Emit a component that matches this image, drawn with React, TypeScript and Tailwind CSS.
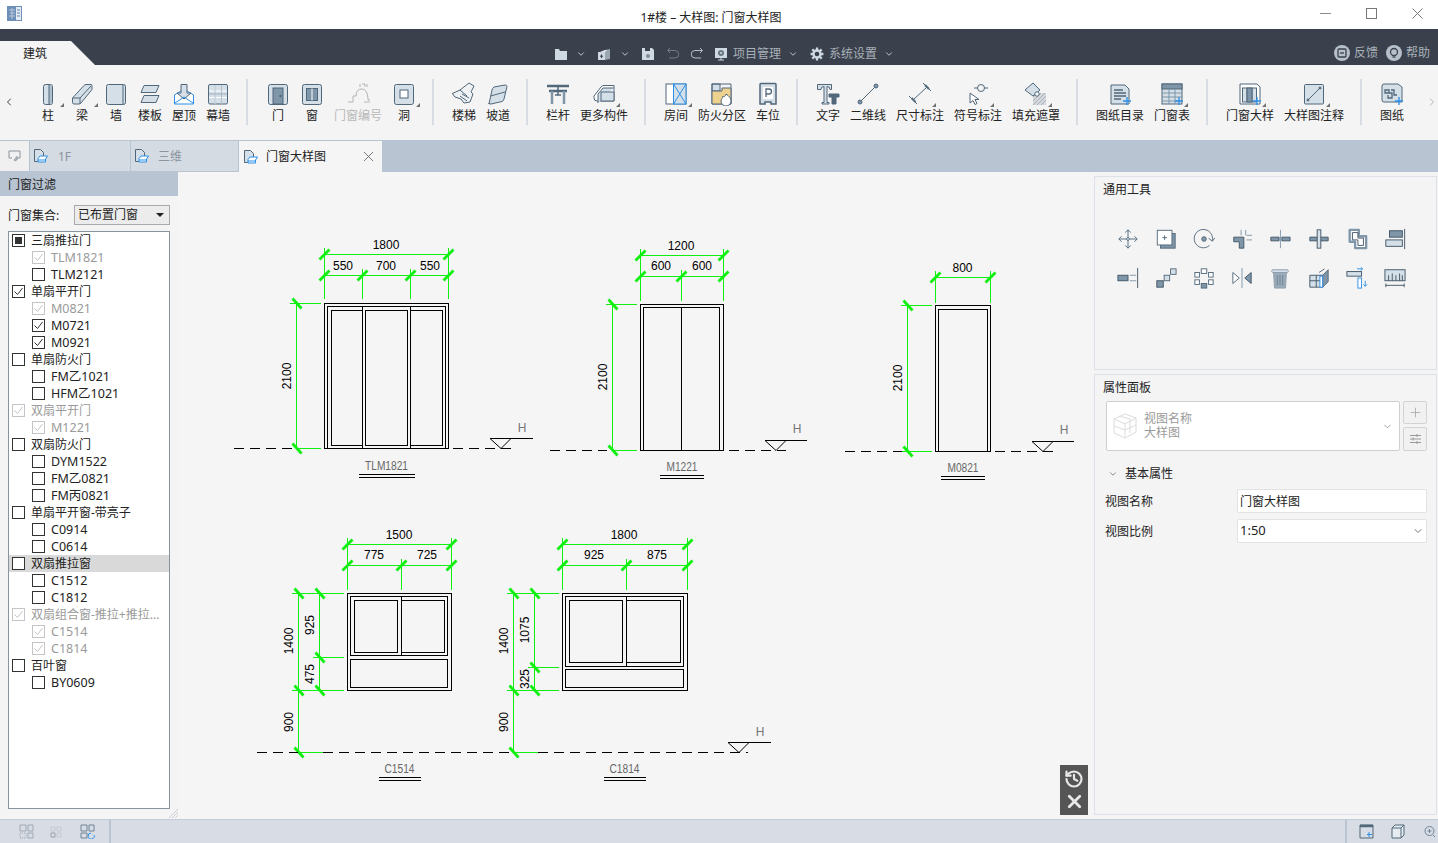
import React from "react";
import { ChevronDown, ChevronLeft, ChevronRight, History, Plus, X } from "lucide-react";

const S = "#51677a";
const F = "#d4dfe7";
const M = "#7f95a8";
const B = "#2b8fe8";

const Svg = ({ children, size = 24 }: { children: React.ReactNode; size?: number }) => (
    <svg width={size} height={size} viewBox="0 0 24 24" fill="none" stroke={S} strokeWidth="1">
        {children}
    </svg>
);

/* ribbon icons */
const ribbonIcons: Record<string, React.ReactNode> = {
    column: (<><rect x="7.5" y="2.5" width="9" height="20" rx="2" fill={F} /><rect x="13" y="3" width="3" height="19" fill="#aebfcc" stroke="none" /><path d="M13 3v19" /></>),
    beam: (<><path d="M2.5 16 14 3.5q1-1 2-1h5q1 0 1 1v4L11 21q-1 1-2 1H4q-1.500 0-1.500-1.500z" fill={F} /><path d="M3 16h7l11-12M10 16v6" /></>),
    wall: (<><rect x="2.500" y="2.500" width="19" height="20" rx="2" fill={F} /><path d="M19 3v19" /></>),
    slab: (<><path d="M6 3.500h15l-3 7H3z" fill={F} strokeLinejoin="round" /><path d="M6 13.500h15l-3 7H3z" fill={F} strokeLinejoin="round" /></>),
    roof: (<><path d="M2.500 13 9 9h6l6.500 4v9h-19z" fill="#fff" stroke={B} /><path d="M9 2.500h6V11h4l-7 6-7-6h4z" fill={F} /><path d="M3 21l9-6 9 6" stroke={B} /></>),
    curtain: (<><rect x="2.500" y="2.500" width="19" height="19.500" rx="1.500" fill={F} /><path d="M9 3v19M15.500 3v19M3 9h18M3 15.500h18" stroke="#fff" /><path d="M9 3v19M15.500 3v19M3 12h18" stroke={M} strokeWidth=".6" /></>),
    door: (<><rect x="2.500" y="2.500" width="19" height="20" rx="2" fill={F} /><rect x="7" y="6" width="10" height="16" fill={M} /><circle cx="14.500" cy="14" r=".8" fill={S} /></>),
    window: (<><rect x="2.500" y="2.500" width="19" height="20" rx="2" fill={F} /><rect x="6.500" y="6.500" width="11" height="12" fill={M} /><path d="M12 6.500v12" stroke="#fff" /></>),
    tag: (<g stroke="#b4b4b4"><path d="M2 20h5v-6h3q0-7 6-7 5 0 6 9v2h2" /><path d="M18 20h6" /><path d="M14 2v3M16 2h3v3M21 2v3" /></g>),
    hole: (<><rect x="2.500" y="2.500" width="19" height="20" rx="2" fill={F} /><rect x="8" y="8" width="8" height="8" fill="#fff" /></>),
    stair: (<><path d="M1.500 11 8 8l9-7 5 3-3 6 2 2-3 8-6 1-3-4-6-2q-2-2-2.500-4z" fill="#eef2f5" /><path d="M8 14l7 5M10 12l7 4M8 8l7 6" /></>),
    ramp: (<><path d="M3 22 6 8q.5-2 2-3l11-2q2 0 2 1.500L18 17q-.5 2-2 2.500L5 22q-2 .5-2-1z" fill={F} /><path d="M4.500 14 19 10" /></>),
    rail: (<><path d="M1 4h22M3 9h18" strokeWidth="2.500" /><path d="M6 9v13M18 9v13" strokeWidth="2.500" stroke={M} /><path d="M12 4v9M9 13h6" stroke={S} strokeWidth="1.500" /></>),
    more: (<><path d="M2 14 9 5q1-1.500 3-1.500h10V19H5q-3 0-3-3z" fill="#fff" /><path d="M6 21V12l5-6h11M9 10h13v9H9z" fill={F} /></>),
    room: (<><rect x="2" y="2" width="20" height="20" fill="#fff" /><rect x="9.500" y="2" width="12.500" height="20" fill={F} stroke={B} /><path d="M9.500 2 22 22M22 2 9.500 22" stroke={B} /></>),
    fire: (<><rect x="2" y="2" width="8" height="7" fill={F} /><path d="M2 2h19v20H2z" /><path d="M2 9h10V6h9v16H2z" fill="#ecd28e" /><path d="M16 12c3 2 5 4 5 7a5 5 0 0 1-10 0c0-2 2-3 2-5 1 1 2 1 3-2z" fill="#fff" stroke={S} /></>),
    parking: (<><path d="M5 1.500h14q1 0 1 1V22h-5v-2H9v2H4V2.500q0-1 1-1z" fill={F} stroke={S} strokeWidth="1.500" /><rect x="7" y="5" width="10" height="12" fill="#fff" stroke="none" /><path d="M10 15V7h3a2 2 0 0 1 0 5h-3" strokeWidth="1.300" /></>),
    text: (<><path d="M1.500 2.500h14v5h-1.500q0-3-3-3v16h2v1.500H6v-1.500h2v-16q-3 0-3 3H1.500z" fill={F} /><path d="M13 12h10v3h-3v7h-4v-7h-3z" fill={S} /></>),
    line2d: (<><path d="M5 19 19 5" /><circle cx="4" cy="20" r="2" fill={M} /><circle cx="20" cy="4" r="2" fill={M} /></>),
    dim: (<><path d="M5 18 19 5" /><path d="M1 14l8 8M15 1l8 8" /><path d="M3.500 16l4 4M17 3l4 4" strokeWidth="2" /></>),
    symbol: (<><path d="M8 6h14" /><circle cx="15" cy="6" r="3.500" fill="#f4f4f4" /><path d="M4 11l0 10 3-2.500 2 4 2-1-2-4h4z" fill="#fff" /></>),
    fill: (<><rect x="9" y="11" width="13" height="12" fill="#d5d9de" stroke="none" /><path d="M9 15l4-4M9 19l8-8M9 23 21 11M13 23l9-9M17 23l5-5" stroke="#a7aeb6" /><path d="M1 8 9 1l7 7-7 6z" fill={F} /><circle cx="13" cy="12" r="2.200" fill="#fff" /></>),
    list: (<><path d="M3 3h14l4 4v15H3z" fill={F} /><path d="M6 8h9M6 11h12M6 14h12M6 17h7" strokeWidth="1.300" /></>),
    table: (<><rect x="2" y="2" width="20" height="20" fill={F} /><rect x="2" y="2" width="20" height="5" fill={M} /><path d="M2 11h20M2 15h20M2 19h20M9 7v15M15 7v15" stroke={M} /></>),
    detail: (<><path d="M2 2h17l3 3v17H2z" fill="#fff" /><rect x="4.500" y="6" width="14" height="14" fill={F} /><path d="M9 6v14M14 6v14" /><rect x="9" y="6" width="5" height="14" fill={M} /></>),
    annot: (<><rect x="2.500" y="2.500" width="19" height="19.500" rx="1" fill={F} /><path d="M6 18 18 6" /><circle cx="6" cy="18" r="1" fill={S} /><circle cx="18" cy="6" r="1" fill={S} /></>),
    sheet: (<><path d="M2 4q0-2 2-2h14l4 3v15H4q-2 0-2-2z" fill={F} /><path d="M5 8h4v3H5zM5 11h7v5H8v-3M11 8h3v5h3" strokeWidth="1.300" /></>),
};

const Plus2 = () => <path d="M19 15v8M15 19h8" stroke={B} strokeWidth="1.300" />;

type RibbonItem = { label: string; icon: string; w: number; caret?: boolean; off?: boolean; add?: boolean };

const groups: RibbonItem[][] = [
    [
        { label: "柱", icon: "column", w: 34, caret: true },
        { label: "梁", icon: "beam", w: 34, caret: true },
        { label: "墙", icon: "wall", w: 34 },
        { label: "楼板", icon: "slab", w: 34 },
        { label: "屋顶", icon: "roof", w: 34 },
        { label: "幕墙", icon: "curtain", w: 34 },
    ],
    [
        { label: "门", icon: "door", w: 34 },
        { label: "窗", icon: "window", w: 34 },
        { label: "门窗编号", icon: "tag", w: 58, off: true },
        { label: "洞", icon: "hole", w: 34, caret: true },
    ],
    [
        { label: "楼梯", icon: "stair", w: 34 },
        { label: "坡道", icon: "ramp", w: 34 },
    ],
    [
        { label: "栏杆", icon: "rail", w: 34 },
        { label: "更多构件", icon: "more", w: 58, caret: true },
    ],
    [
        { label: "房间", icon: "room", w: 34, caret: true },
        { label: "防火分区", icon: "fire", w: 58 },
        { label: "车位", icon: "parking", w: 34 },
    ],
    [
        { label: "文字", icon: "text", w: 34 },
        { label: "二维线", icon: "line2d", w: 46 },
        { label: "尺寸标注", icon: "dim", w: 58, caret: true },
        { label: "符号标注", icon: "symbol", w: 58, caret: true },
        { label: "填充遮罩", icon: "fill", w: 58, caret: true },
    ],
    [
        { label: "图纸目录", icon: "list", w: 58, add: true },
        { label: "门窗表", icon: "table", w: 46, caret: true, add: true },
    ],
    [
        { label: "门窗大样", icon: "detail", w: 58, caret: true, add: true },
        { label: "大样图注释", icon: "annot", w: 70, caret: true },
    ],
    [{ label: "图纸", icon: "sheet", w: 34, add: true }],
];

const RibbonBtn = ({ item }: { item: RibbonItem }) => (
    <div className="flex flex-col items-center pt-[17px]" style={{ width: item.w }}>
        <div className="relative h-[24px] w-[24px]">
            <Svg>
                {ribbonIcons[item.icon]}
                {item.add && <Plus2 />}
            </Svg>
            {item.caret && (
                <div className="absolute right-[-4px] bottom-[-1px] h-0 w-0 border-b-[4px] border-l-[4px] border-b-[#707070] border-l-transparent" />
            )}
        </div>
        <div className={`mt-[1px] whitespace-nowrap text-[12px] leading-[18px] ${item.off ? "text-[#b8b8b8]" : "text-[#222]"}`}>
            {item.label}
        </div>
    </div>
);

const Ribbon = () => (
    <div className="flex h-[75px] bg-[#f4f4f4]">
        <div className="flex w-[31px] items-center pb-[1px] pl-[3px]">
            <ChevronLeft size={12} color="#444" strokeWidth={2} />
        </div>
        {groups.map((g, i) => (
            <React.Fragment key={i}>
                {i > 0 && <div className="ml-[11px] mr-[13px] mt-[14px] h-[46px] w-[2px] bg-[#d8dde5]" />}
                {g.map((it) => (
                    <RibbonBtn key={it.label} item={it} />
                ))}
            </React.Fragment>
        ))}
        <div className="flex flex-1 items-center justify-end pb-[1px]">
            <ChevronRight size={12} color="#b5b5b5" strokeWidth={2} />
        </div>
    </div>
);

const TitleBar = () => (
    <div className="relative flex h-[29px] items-center justify-center bg-white pr-[16px] pt-[6px]">
        <svg className="absolute left-[7px] top-[6px]" width="15" height="15" viewBox="0 0 15 15">
            <rect width="15" height="15" fill="#6d8fb8" />
            <rect x="9" y="1" width="5" height="13" fill="#e4ebf3" />
            <path d="M2 4h6M3 7h5M2 10h6M5 2v11" stroke="#b9c9da" strokeWidth="1" />
            <path d="M10 4h3M10 7h3M10 10h3" stroke="#5f86b3" strokeWidth="1" />
        </svg>
        <div className="text-[12px] leading-[18px] text-[#222]">1#楼 – 大样图: 门窗大样图</div>
        <div className="absolute right-[15px] top-[8px] flex items-center gap-[35px]">
            <svg width="11" height="11" viewBox="0 0 11 11" stroke="#8a8a8a"><path d="M0 5.500h11" /></svg>
            <svg width="11" height="11" viewBox="0 0 11 11" stroke="#777" fill="none"><rect x=".5" y=".5" width="10" height="10" /></svg>
            <svg width="11" height="11" viewBox="0 0 11 11" stroke="#777"><path d="M.5.5l10 10M10.500.5l-10 10" /></svg>
        </div>
    </div>
);

const Hd = "#cfd9e2";
const Chev = () => <ChevronDown size={10} color="#d5dbe1" strokeWidth={2} />;

const HeaderBar = () => (
    <div className="relative flex h-[36px] items-end bg-[#3a414c]">
        <div className="flex h-[24px] w-[95px] items-center bg-[#f4f4f4] pl-[23px] pt-[1px] text-[12px] text-[#222] [clip-path:polygon(0_0,71px_0,95px_100%,0_100%)]">
            建筑
        </div>
        <div className="absolute left-[554px] top-[17px] flex items-center text-[12px] leading-[16px] text-[#a8b0b9]">
            <svg width="14" height="14" viewBox="0 0 14 14"><path d="M1 2h4l1 2h7v9H1z" fill={Hd} /></svg>
            <div className="ml-[8px] mr-[11px]"><Chev /></div>
            <svg width="14" height="14" viewBox="0 0 14 14"><path d="M1 5h7v8H1z" fill={Hd} /><path d="M8 3l5-1v10l-5 1z" fill="#9aa6b2" /><path d="M3 5l5-2h2L8 5z" fill="#e6ebf0" /><path d="M4.500 7.500v3.500M3 9.200h3" stroke="#3a414c" /></svg>
            <div className="ml-[9px] mr-[11px]"><Chev /></div>
            <svg width="14" height="14" viewBox="0 0 14 14"><path d="M1 1h10l2 2v10H1z" fill={Hd} /><rect x="4" y="1" width="5" height="3" fill="#3a414c" /><circle cx="7" cy="9" r="2" fill="#7f8b97" /></svg>
            <svg className="ml-[11px]" width="14" height="14" viewBox="0 0 14 14" fill="none" stroke="#6f7b87"><path d="M4 1 1.500 3.500 4 6M2 3.500h7a3.500 3.500 0 0 1 0 7.500H3" /></svg>
            <svg className="ml-[10px]" width="14" height="14" viewBox="0 0 14 14" fill="none" stroke="#b5bdc5"><path d="M10 1l2.500 2.500L10 6M12 3.500H5a3.500 3.500 0 0 0 0 7.500h6" /></svg>
            <svg className="ml-[10px]" width="14" height="14" viewBox="0 0 14 14"><rect x="1" y="1" width="12" height="10" fill={Hd} /><circle cx="7" cy="6" r="3" fill="#6b7783" /><circle cx="7" cy="6" r="1" fill={Hd} /><path d="M7 11v2M4 13h6" stroke={Hd} /></svg>
            <span className="ml-[5px]">项目管理</span>
            <div className="ml-[7px] mr-[12px]"><Chev /></div>
            <svg width="14" height="14" viewBox="0 0 24 24" fill="none" stroke={Hd} strokeWidth="4"><circle cx="12" cy="12" r="6" /><path d="M12 1v4M12 19v4M1 12h4M19 12h4M4 4l3 3M17 17l3 3M4 20l3-3M17 7l3-3" /></svg>
            <span className="ml-[5px]">系统设置</span>
            <div className="ml-[7px]"><Chev /></div>
        </div>
        <div className="absolute right-[8px] top-[16px] flex items-center text-[12px] leading-[16px] text-[#a8b0b9]">
            <svg width="16" height="16" viewBox="0 0 16 16"><circle cx="8" cy="8" r="8" fill="#b6c0ca" /><rect x="4" y="4" width="8" height="8" rx="1" fill="none" stroke="#3a414c" strokeWidth="1.300" /><path d="M6 8h4" stroke="#3a414c" strokeWidth="1.300" /></svg>
            <span className="ml-[4px]">反馈</span>
            <svg className="ml-[8px]" width="16" height="16" viewBox="0 0 16 16"><circle cx="8" cy="8" r="8" fill="#b6c0ca" /><circle cx="8" cy="7" r="3.500" fill="none" stroke="#3a414c" strokeWidth="1.300" /><path d="M6.500 12h3" stroke="#3a414c" strokeWidth="1.300" /></svg>
            <span className="ml-[4px]">帮助</span>
        </div>
    </div>
);

const SheetIcon = () => (
    <svg width="16" height="16" viewBox="0 0 16 16" fill="none">
        <path d="M1.500 1.500h6l3 3v9h-9z" fill="#d4dfe7" stroke="#51677a" />
        <path d="M5 10.500 7 8h7.500l-2 3v3H5z" fill="#fff" stroke="#2b8fe8" />
        <path d="M5 12h8" stroke="#2b8fe8" />
    </svg>
);

const TabBar = () => (
    <div className="flex h-[32px] items-stretch gap-[1px] bg-[#b8c4d2] pt-[1px]">
        <div className="mb-[1px] flex w-[29px] items-center justify-center bg-[#f0f0f0]">
            <svg width="14" height="12" viewBox="0 0 14 12" fill="none" stroke="#8a939d"><path d="M1 1h11v7H7M1 1v7h3" /><path d="M9 6v4H6M7.500 8.500 6 10l1.500 1" /></svg>
        </div>
        <div className="mb-[1px] flex w-[100px] items-center bg-[#d5dbe3] pl-[3px] text-[12px] text-[#8b95a0]">
            <SheetIcon />
            <span className="ml-[9px] pt-[1px]">1F</span>
        </div>
        <div className="mb-[1px] flex w-[107px] items-center bg-[#d5dbe3] pl-[3px] text-[12px] text-[#8b95a0]">
            <SheetIcon />
            <span className="ml-[8px] pt-[1px]">三维</span>
        </div>
        <div className="flex w-[143px] items-center bg-[#f5f5f5] pl-[4px] pr-[5px] text-[12px] text-[#222]">
            <SheetIcon />
            <span className="ml-[7px] flex-1 pt-[1px]">门窗大样图</span>
            <X size={17} color="#555" strokeWidth={1.1} />
        </div>
    </div>
);

type Row = { t: string; lv: 0 | 1; st?: "on" | "mix"; off?: boolean; hl?: boolean };
const rows: Row[] = [
    { t: "三扇推拉门", lv: 0, st: "mix" },
    { t: "TLM1821", lv: 1, st: "on", off: true },
    { t: "TLM2121", lv: 1 },
    { t: "单扇平开门", lv: 0, st: "on" },
    { t: "M0821", lv: 1, st: "on", off: true },
    { t: "M0721", lv: 1, st: "on" },
    { t: "M0921", lv: 1, st: "on" },
    { t: "单扇防火门", lv: 0 },
    { t: "FM乙1021", lv: 1 },
    { t: "HFM乙1021", lv: 1 },
    { t: "双扇平开门", lv: 0, st: "on", off: true },
    { t: "M1221", lv: 1, st: "on", off: true },
    { t: "双扇防火门", lv: 0 },
    { t: "DYM1522", lv: 1 },
    { t: "FM乙0821", lv: 1 },
    { t: "FM丙0821", lv: 1 },
    { t: "单扇平开窗-带亮子", lv: 0 },
    { t: "C0914", lv: 1 },
    { t: "C0614", lv: 1 },
    { t: "双扇推拉窗", lv: 0, hl: true },
    { t: "C1512", lv: 1 },
    { t: "C1812", lv: 1 },
    { t: "双扇组合窗-推拉+推拉...", lv: 0, st: "on", off: true },
    { t: "C1514", lv: 1, st: "on", off: true },
    { t: "C1814", lv: 1, st: "on", off: true },
    { t: "百叶窗", lv: 0 },
    { t: "BY0609", lv: 1 },
];

const Check = ({ st, off }: { st?: "on" | "mix"; off?: boolean }) => (
    <svg width="13" height="13" viewBox="0 0 13 13" className="shrink-0">
        <rect x=".5" y=".5" width="12" height="12" fill="#fff" stroke={off ? "#c4c4c4" : "#333"} />
        {st === "on" && <path d="M2.500 6.500 5.500 9.500 10.500 3" fill="none" stroke={off ? "#c4c4c4" : "#333"} />}
        {st === "mix" && <rect x="3" y="3" width="7" height="7" fill="#333" />}
    </svg>
);

const LeftPanel = () => (
    <div className="flex w-[178px] shrink-0 flex-col bg-[#f4f4f4]">
        <div className="flex h-[24px] items-center bg-[#b8c4d2] pl-[8px] pt-[1px] text-[12px] text-[#222]">门窗过滤</div>
        <div className="mt-[9px] flex h-[20px] items-center pl-[8px] pr-[8px] text-[12px] text-[#222]">
            <span className="w-[66px] pt-[1px]">门窗集合:</span>
            <div className="flex h-[20px] flex-1 items-center justify-between border border-[#a9a9a9] bg-[#ececec] pl-[3px] pr-[5px]">
                <span>已布置门窗</span>
                <div className="h-0 w-0 border-x-[4px] border-t-[4px] border-x-transparent border-t-[#222]" />
            </div>
        </div>
        <div className="relative mx-[8px] mt-[6px] h-[578px] border border-[#8a929c] bg-white">
            {rows.map((r) => (
                <div
                    key={r.t}
                    className={`flex h-[17px] items-center whitespace-nowrap ${r.lv ? "pl-[23px] text-[12.5px]" : "pl-[3px] text-[12px]"} ${r.off ? "text-[#9a9a9a]" : "text-[#222]"} ${r.hl ? "bg-[#d9d9d9]" : ""}`}
                >
                    <Check st={r.st} off={r.off} />
                    <span className={r.lv ? "ml-[6px] pt-[2px]" : "ml-[6px]"}>{r.t}</span>
                </div>
            ))}
            <svg className="absolute -right-[9px] -bottom-[10px]" width="9" height="9" viewBox="0 0 9 9" stroke="#c9ced4"><path d="M0 9 9 0M3 9l6-6M6 9l3-3" /></svg>
        </div>
    </div>
);

const GREEN = "#10f010";

const Ln = ({ d, c = "#000" }: { d: string; c?: string }) => <path d={d} stroke={c} fill="none" shapeRendering="crispEdges" />;

const HTick = ({ x, y }: { x: number; y: number }) => (
    <g stroke={GREEN} fill="none">
        <path d={`M${x - 5} ${y + 5} L${x + 5} ${y - 5}`} strokeWidth="2.800" />
        <path d={`M${x} ${y - 7} V${y + 5}`} strokeWidth="1" shapeRendering="crispEdges" />
    </g>
);
const VTick = ({ x, y }: { x: number; y: number }) => (
    <path d={`M${x - 4} ${y - 5} L${x + 5} ${y + 5}`} stroke={GREEN} strokeWidth="2.800" fill="none" />
);

const HDim = ({ y, xs }: { y: number; xs: number[] }) => (
    <g>
        <Ln c={GREEN} d={`M${xs[0]} ${y}H${xs[xs.length - 1]}`} />
        {xs.map((x) => <HTick key={x} x={x} y={y} />)}
    </g>
);
const VDim = ({ x, ys }: { x: number; ys: number[] }) => (
    <g>
        <Ln c={GREEN} d={`M${x} ${ys[0]}V${ys[ys.length - 1]}`} />
        {ys.map((y) => <VTick key={y} x={x} y={y} />)}
    </g>
);

const T = ({ x, y, t, rot, c = "#000", len }: { x: number; y: number; t: string; rot?: boolean; c?: string; len?: number }) => (
    <text
        x={x}
        y={y}
        fill={c}
        textAnchor="middle"
        dominantBaseline="central"
        fontSize="12"
        fontFamily="'Liberation Sans', sans-serif"
        textLength={len}
        lengthAdjust={len ? "spacingAndGlyphs" : undefined}
        transform={rot ? `rotate(-90 ${x} ${y})` : undefined}
    >
        {t}
    </text>
);

const Level = ({ x, y, mark, tx, ty }: { x: number; y: number; mark: number; tx: number; ty: number }) => (
    <g>
        <path d={`M${x + 21} ${y - 10}H${mark}`} stroke="#000" fill="none" shapeRendering="crispEdges" />
        <path d={`M${x} ${y - 10}H${x + 21}L${x + 11} ${y}Z`} stroke="#000" fill="none" />
        <T x={tx} y={ty} t="H" c="#777" />
    </g>
);

const Tag = ({ x, y, t, w, len }: { x: number; y: number; t: string; w: number; len: number }) => (
    <g>
        <T x={x} y={y} t={t} c="#666" len={len} />
        <Ln d={`M${x - w} ${y + 8.500}H${x + w}M${x - w} ${y + 11.500}H${x + w}`} />
    </g>
);

const Dash = ({ y, x1, x2 }: { y: number; x1: number; x2: number }) => (
    <path d={`M${x1} ${y}H${x2}`} stroke="#000" strokeDasharray="10 6" fill="none" shapeRendering="crispEdges" />
);

const Drawing = () => (
    <svg width="916" height="647" viewBox="178 172 916 647" className="block">
        {/* TLM1821 */}
        <g>
            <Ln d="M324.500 303.500H448.500V448.500H324.500ZM327.500 448V306.500H445.500V448M331.500 445.500V310.500H362.500M362.500 445.500H331.500M410.500 310.500H442.500V445.500H410.500M362.500 306.500V448.500M410.500 306.500V448.500M365.500 310.500H407.500V445.500H365.500Z" />
            <HDim y={254.500} xs={[324.500, 448.500]} />
            <HDim y={275.500} xs={[324.500, 362.500, 410.500, 448.500]} />
            <Ln c={GREEN} d="M324.500 250V299M362.500 276V299M410.500 276V299M448.500 250V299M290 303.500H321M297 448.500H321" />
            <VDim x={296.500} ys={[303.500, 448.500]} />
            <T x={386} y={245} t="1800" />
            <T x={343} y={266} t="550" />
            <T x={386} y={266} t="700" />
            <T x={430} y={266} t="550" />
            <T x={287} y={376} t="2100" rot />
            <Dash y={448.500} x1={234} x2={292} />
            <Dash y={448.500} x1={453} x2={511} />
            <Level x={490} y={448.500} mark={533} tx={522} ty={428} />
            <Tag x={386.500} y={466} t="TLM1821" w={28} len={43} />
        </g>
        {/* M1221 */}
        <g>
            <Ln d="M640.500 304.500H723.500V450.500H640.500ZM643.500 450V307.500H719.500V450M681.500 307.500V450" />
            <HDim y={255.500} xs={[640.500, 723.500]} />
            <HDim y={276.500} xs={[640.500, 681.500, 723.500]} />
            <Ln c={GREEN} d="M640.500 250V301M681.500 277V301M723.500 250V301M606 304.500H637M612 450.500H637" />
            <VDim x={612.500} ys={[304.500, 450.500]} />
            <T x={681} y={246} t="1200" />
            <T x={661} y={266} t="600" />
            <T x={702} y={266} t="600" />
            <T x={603} y={377} t="2100" rot />
            <Dash y={450.500} x1={550} x2={607} />
            <Dash y={450.500} x1={729} x2={786} />
            <Level x={765} y={450.500} mark={807} tx={797} ty={429} />
            <Tag x={682} y={467} t="M1221" w={22} len={31} />
        </g>
        {/* M0821 */}
        <g>
            <Ln d="M935.500 305.500H990.500V451.500H935.500ZM938.500 451V309.500H987.500V451" />
            <HDim y={277.500} xs={[935.500, 990.500]} />
            <Ln c={GREEN} d="M935.500 272V303M990.500 272V303M901 305.500H932M901 451.500H932" />
            <VDim x={907.500} ys={[305.500, 451.500]} />
            <T x={962.500} y={268} t="800" />
            <T x={898} y={378} t="2100" rot />
            <Dash y={451.500} x1={845} x2={902} />
            <Dash y={451.500} x1={995} x2={1053} />
            <Level x={1032} y={451.500} mark={1074} tx={1064} ty={430} />
            <Tag x={963} y={468} t="M0821" w={22} len={31} />
        </g>
        {/* C1514 */}
        <g>
            <Ln d="M347.500 593.500H451.500V690.500H347.500ZM350.500 596.500H447.500V655.500H350.500ZM350.500 659.500H447.500V687.500H350.500ZM401.500 596.500V655.500M354.500 600.500H397.500V652.500H354.500ZM401.500 600.500H444.500V652.500H401.500" />
            <HDim y={544.500} xs={[347.500, 451.500]} />
            <HDim y={565.500} xs={[347.500, 401.500, 451.500]} />
            <Ln c={GREEN} d="M347.500 540V590M401.500 566V590M451.500 540V590M292 593.500H344M313 657.500H344M292 690.500H344M298 752.500H323" />
            <VDim x={298.500} ys={[593.500, 690.500, 752.500]} />
            <VDim x={319.500} ys={[593.500, 657.500, 690.500]} />
            <T x={399} y={535} t="1500" />
            <T x={374} y={555} t="775" />
            <T x={427} y={555} t="725" />
            <T x={289} y={641} t="1400" rot />
            <T x={310} y={625} t="925" rot />
            <T x={310} y={674} t="475" rot />
            <T x={289} y={722} t="900" rot />
            <Tag x={399.500} y={769} t="C1514" w={21} len={30} />
        </g>
        {/* C1814 */}
        <g>
            <Ln d="M562.500 593.500H687.500V690.500H562.500ZM565.500 596.500H683.500V666.500H565.500ZM565.500 669.500H683.500V687.500H565.500ZM626.500 596.500V666.500M569.500 600.500H622.500V662.500H569.500ZM626.500 600.500H680.500V662.500H626.500" />
            <HDim y={544.500} xs={[562.500, 687.500]} />
            <HDim y={565.500} xs={[562.500, 626.500, 687.500]} />
            <Ln c={GREEN} d="M562.500 540V590M626.500 566V590M687.500 540V590M507 593.500H559M528 667.500H559M507 690.500H559M513 752.500H538" />
            <VDim x={513.500} ys={[593.500, 690.500, 752.500]} />
            <VDim x={534.500} ys={[593.500, 667.500, 690.500]} />
            <T x={624} y={535} t="1800" />
            <T x={594} y={555} t="925" />
            <T x={657} y={555} t="875" />
            <T x={504} y={641} t="1400" rot />
            <T x={525} y={630} t="1075" rot />
            <T x={525} y={679} t="325" rot />
            <T x={504} y={722} t="900" rot />
            <Tag x={624.500} y={769} t="C1814" w={21} len={30} />
            <Level x={728} y={752.500} mark={771} tx={760} ty={732} />
        </g>
        <Dash y={752.500} x1={257} x2={298} />
        <Dash y={752.500} x1={323} x2={513} />
        <Dash y={752.500} x1={538} x2={748} />
    </svg>
);

const toolIcons: React.ReactNode[] = [
    <><path d="M12 2v20M2 12h20M9 5l3-3 3 3M9 19l3 3 3-3M5 9l-3 3 3 3M19 9l3 3-3 3" /><circle cx="12" cy="12" r="1.500" fill="#fff" /></>,
    <><rect x="6" y="6" width="16" height="16" fill={M} /><rect x="2.500" y="2.500" width="16" height="16" fill="#fff" /><path d="M10.500 8v5M8 10.500h5" /></>,
    <><path d="M21 14a10 10 0 1 0-3 5" /><path d="M17 11l4 3.500 3-4" /><circle cx="12" cy="12" r="2.500" fill={M} /></>,
    <><path d="M3 10h11v12h-5v-7H3z" fill={M} stroke="#3f5365" /><path d="M11 2v6M16 2v6M17 8h6M17 13h6" stroke={M} /></>,
    <><path d="M2 10h9v4H2zM14 10h9v4h-9z" fill={M} stroke="#3f5365" /><path d="M12.500 2v20" stroke={M} /></>,
    <><path d="M2 10h20v4H2z" fill={M} stroke="#3f5365" /><rect x="10" y="2" width="4" height="20" fill={F} stroke="#3f5365" /></>,
    <><path d="M4 2h10v7h8v13H10v-7H4z" fill="#fff" stroke={M} strokeWidth="2.500" strokeLinejoin="round" /><path d="M7 5h6v6h6v8h-6v-6H7z" fill="#fff" stroke="#3f5365" /></>,
    <><path d="M22.500 1v22" stroke="#3f5365" /><rect x="6" y="3" width="14" height="7" fill={M} stroke="#3f5365" /><rect x="2" y="13" width="18" height="7" fill={F} stroke="#3f5365" /></>,
    <><path d="M22.500 1v22" stroke="#3f5365" /><rect x="1" y="9" width="11" height="6" fill={M} stroke="#3f5365" /><path d="M14 9h7M14 15h7" stroke={M} /></>,
    <><rect x="2" y="15" width="7" height="7" fill={M} stroke="#3f5365" /><rect x="10" y="9" width="6" height="6" fill={F} /><rect x="17" y="2" width="6" height="6" fill={F} /></>,
    <><rect x="9" y="2" width="6" height="5" fill="#fff" /><rect x="2" y="6" width="5" height="5" fill="#fff" /><rect x="17" y="6" width="5" height="5" fill="#fff" /><rect x="2" y="14" width="5" height="5" fill="#fff" /><rect x="17" y="14" width="5" height="5" fill="#fff" /><rect x="9" y="18" width="6" height="5" fill={M} /></>,
    <><path d="M12 1v22" stroke={M} /><path d="M2 6l7 6-7 6z" fill="#fff" /><path d="M22 6l-7 6 7 6z" fill={M} stroke="#3f5365" /></>,
    <><rect x="3" y="3" width="18" height="3" rx="1" fill={F} stroke="#8c9cab" /><path d="M5 6h14l-1 17H6z" fill="#9aabb9" stroke="#8c9cab" /><path d="M9 9v11M12 9v11M15 9v11" stroke="#6f8090" /></>,
    <><path d="M2 9h14v13H2z" fill={F} stroke="#3f5365" /><path d="M9 9v13M2 15h14" stroke="#3f5365" /><path d="M16 9l6-6v13l-6 6z" fill={M} /><path d="M12 6l6-4" /><rect x="13" y="10" width="3" height="12" fill="#fff" stroke={B} /></>,
    <><rect x="1" y="5" width="16" height="5" fill={F} stroke="#3f5365" /><path d="M12 2h6M16 0l2 2-2 2" stroke={B} /><rect x="13" y="12" width="4" height="11" fill="#fff" stroke={B} /><path d="M21 15v6M19 19l2 2 2-2" stroke={B} /></>,
    <><rect x="1" y="3" width="22" height="12" fill={F} stroke="#3f5365" /><path d="M5 9v6M9 7v8M13 9v6M17 7v8M20 9v6" stroke="#3f5365" /><path d="M2 20h20M2 18v4M22 18v4" stroke="#3f5365" /></>,
];

const RightPanel = () => (
    <div className="flex w-[344px] shrink-0 flex-col gap-[4px] bg-[#f4f4f4] pb-[4px] pr-[1px] pt-[4px] text-[12px] text-[#222]">
        <div className="h-[194px] border border-[#dde2e8] pl-[8px] pt-[5px]">
            <div className="leading-[16px]">通用工具</div>
            <div className="ml-[6px] mt-[21px] grid grid-cols-[repeat(8,38.1px)] grid-rows-[39px_39px]">
                {toolIcons.map((ic, i) => (
                    <div key={i} className="flex items-center justify-center">
                        <Svg size={22}>{ic}</Svg>
                    </div>
                ))}
            </div>
        </div>
        <div className="flex-1 border border-[#dde2e8] pl-[8px] pt-[5px]">
            <div className="leading-[16px]">属性面板</div>
            <div className="ml-[3px] mt-[5px] flex gap-[3px]">
                <div className="flex h-[50px] w-[294px] items-center rounded-[2px] border border-[#cfcfcf] bg-white pl-[4px] pr-[6px] text-[#9a9a9a]">
                    <svg width="28" height="28" viewBox="0 0 28 28" fill="none" stroke="#dcdcdc"><path d="M14 2 25 6v14l-11 6-11-5V7zM3 7l11 5 11-6M14 12v14M8 4l11 3v14M3 14l11 4 11-5" /></svg>
                    <div className="ml-[5px] flex-1 leading-[14px]">
                        视图名称
                        <br />
                        大样图
                    </div>
                    <ChevronDown size={11} color="#999" />
                </div>
                <div className="flex flex-col gap-[3px]">
                    <div className="flex h-[23px] w-[24px] items-center justify-center rounded-[2px] border border-[#d3d3d3] bg-[#f1f1f1]"><Plus size={15} color="#aaa" strokeWidth={1.4} /></div>
                    <div className="flex h-[24px] w-[24px] items-center justify-center rounded-[2px] border border-[#d3d3d3] bg-[#f1f1f1]">
                        <svg width="11" height="10" viewBox="0 0 11 10" fill="none" stroke="#999"><path d="M0 1.500h11M0 5h11M0 8.500h11M7 0v3M3 3.500v3M7 7v3" /></svg>
                    </div>
                </div>
            </div>
            <div className="ml-[5px] mt-[14px] flex items-center leading-[18px]">
                <ChevronDown size={10} color="#555" strokeWidth={1.6} />
                <span className="ml-[7px]">基本属性</span>
            </div>
            <div className="mt-[6px] flex items-center pl-[2px] pr-[9px]">
                <span className="w-[132px] pt-[1px]">视图名称</span>
                <div className="flex h-[24px] flex-1 items-center rounded-[2px] border border-[#e2e2e2] bg-white pl-[2px] pt-[1px]">门窗大样图</div>
            </div>
            <div className="mt-[6px] flex items-center pl-[2px] pr-[9px]">
                <span className="w-[132px] pt-[1px]">视图比例</span>
                <div className="flex h-[24px] flex-1 items-center justify-between rounded-[2px] border border-[#e2e2e2] bg-white pl-[2px] pr-[2px] text-[13px]">
                    1:50
                    <ChevronDown size={12} color="#555" strokeWidth={1.6} />
                </div>
            </div>
        </div>
    </div>
);

const StatusBar = () => (
    <div className="flex h-[24px] items-center border-t border-[#c3ccd7] bg-[#d8dde5]">
        <div className="flex h-full w-[111px] items-center border-r-2 border-[#b8c4d2] pl-[19px]">
            <svg width="15" height="15" viewBox="0 0 15 15" fill="none" stroke="#a0a8b2"><path d="M1 1h6v6H1zM9 1h5v6H9zM9 9h5v5H9z" /><path d="M1 9h6v5H1z" strokeDasharray="1 1" /></svg>
            <svg className="ml-[16px]" width="12" height="12" viewBox="0 0 12 12" fill="none" stroke="#c4cad2"><path d="M1 1h4v4H1zM7 1h4v4H7zM7 7h4v4H7z" /><path d="M1 7h4v4H1z" stroke="#9aa2ac" /></svg>
            <svg className="ml-[18px]" width="15" height="15" viewBox="0 0 15 15" fill="none" stroke="#6e8296"><path d="M1 1h6v6H1zM9 1h5v6H9zM1 9h6v5H1z" /><path d="M14 11a3 3 0 1 1-3-2" stroke="#2b8fe8" /></svg>
        </div>
        <div className="flex-1" />
        <div className="flex h-full w-[93px] items-center border-l-2 border-[#b8c4d2] pl-[12px]">
            <svg width="15" height="15" viewBox="0 0 15 15" fill="none" stroke="#51677a"><path d="M1 1h13v13H1z" /><path d="M1 2h13" strokeWidth="2.500" /><path d="M10 8v5M8 10.500h5" stroke="#2b8fe8" /></svg>
            <svg className="ml-[17px]" width="14" height="15" viewBox="0 0 14 15" fill="none" stroke="#51677a"><path d="M1 4l3-3h9v10l-3 3H1z" fill="#e6ebf0" /><path d="M1 4h9v10M10 4l3-3" /></svg>
            <svg className="ml-[18px]" width="13" height="15" viewBox="0 0 13 15" fill="none" stroke="#6e8296"><circle cx="6.500" cy="7" r="4.500" /><path d="M4.500 7h4M6.500 5v4M10 11l2 2" /></svg>
        </div>
    </div>
);

export default function App() {
    return (
        <div className="flex h-[843px] w-[1438px] flex-col overflow-hidden bg-[#f4f4f4] font-['Noto_Sans','Noto_Sans_CJK_SC',sans-serif]">
            <TitleBar />
            <HeaderBar />
            <Ribbon />
            <TabBar />
            <div className="flex h-[647px]">
                <LeftPanel />
                <div className="relative w-[916px] shrink-0 bg-[#f5f5f5]">
                    <Drawing />
                    <div className="absolute left-[882px] top-[593px] flex h-[50px] w-[28px] flex-col items-center justify-center gap-[2px] bg-[#555]">
                        <History size={20} color="#e8e8e8" strokeWidth={2.6} />
                        <X size={21} color="#e8e8e8" strokeWidth={3.2} />
                    </div>
                </div>
                <RightPanel />
            </div>
            <StatusBar />
        </div>
    );
}
